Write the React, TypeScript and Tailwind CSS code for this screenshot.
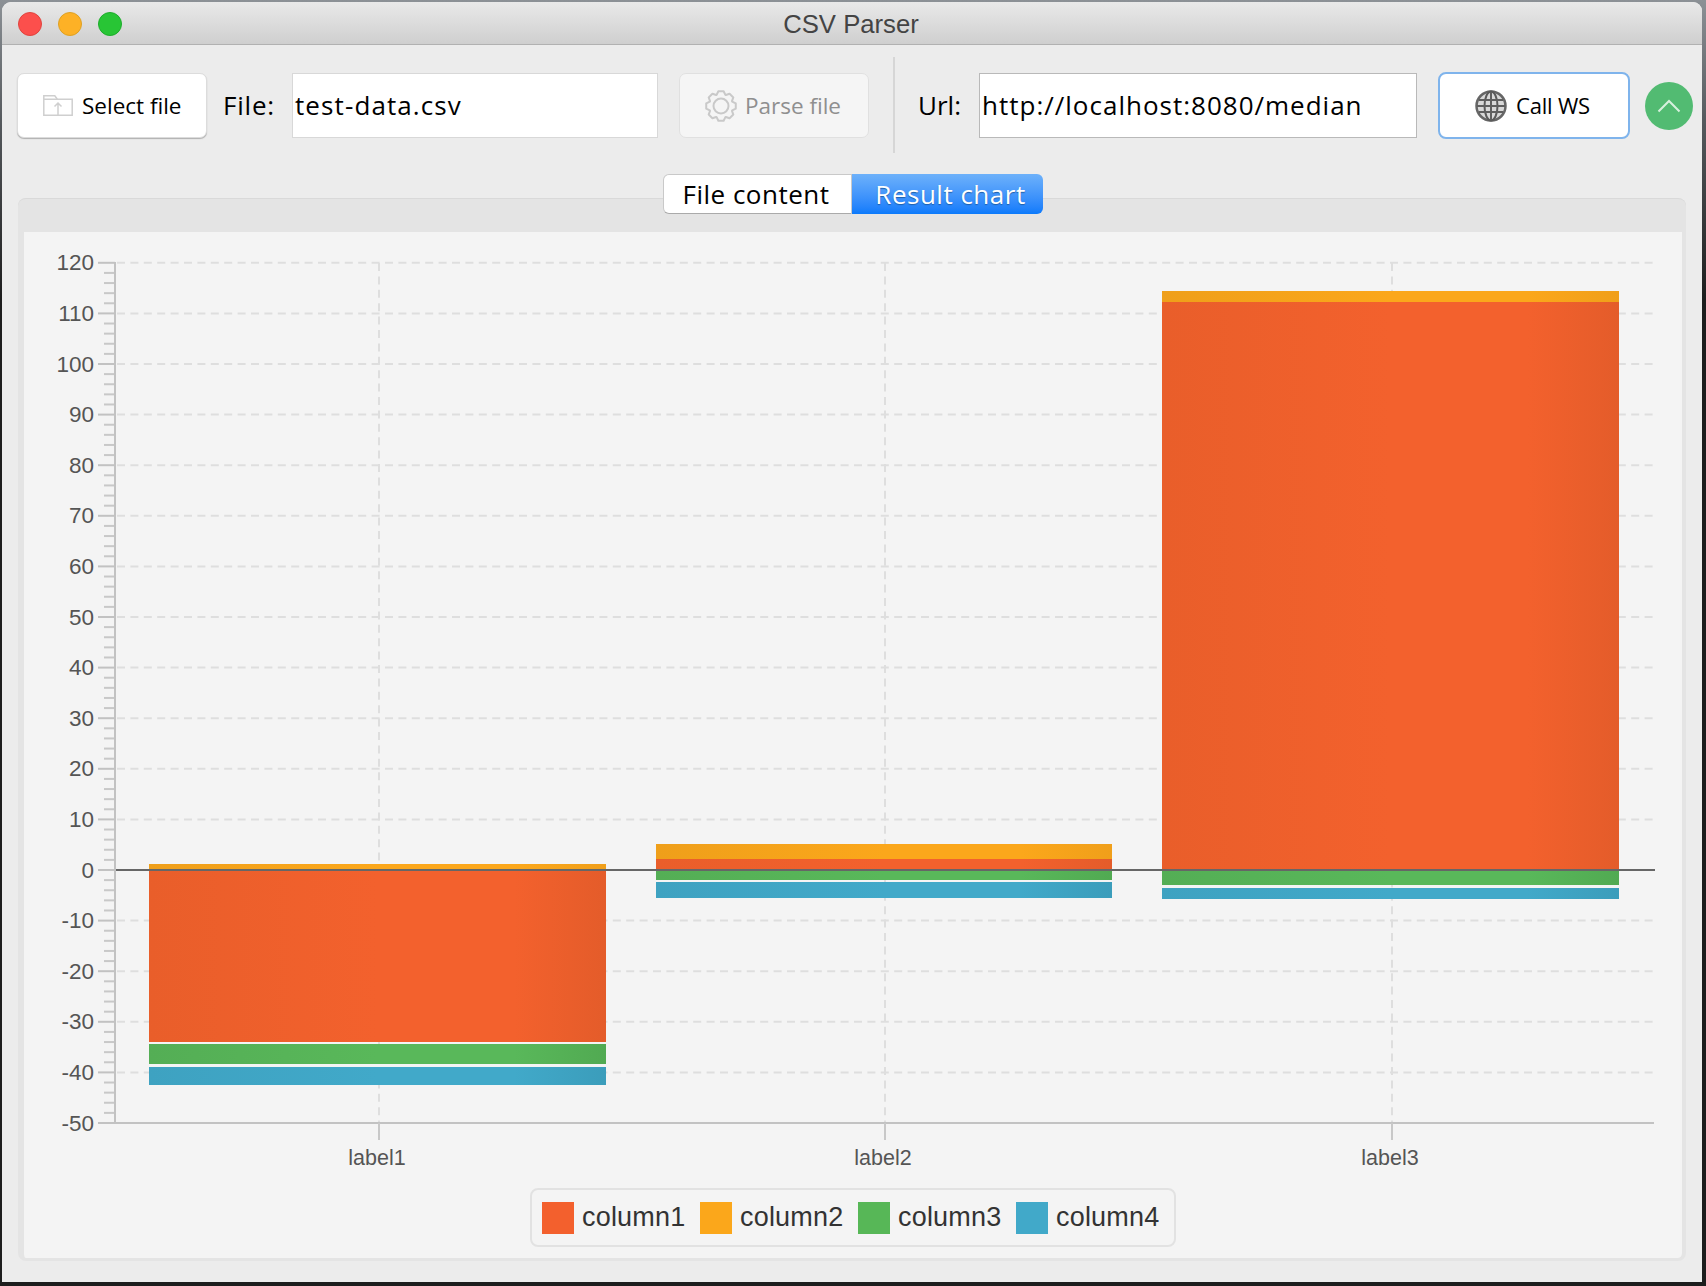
const majorValues = [120, 110, 100, 90, 80, 70, 60, 50, 40, 30, 20, 10, 0, -10, -20, -30, -40, -50];
const categories = [
  { label: 'label1', x: 379, textX: 377 },
  { label: 'label2', x: 885, textX: 883 },
  { label: 'label3', x: 1392, textX: 1390 },
];
const bars = [
  { x: 149, w: 457, y: 864, h: 6, fill: 'url(#yellow)' },
  { x: 149, w: 457, y: 870, h: 172, fill: 'url(#red)' },
  { x: 149, w: 457, y: 1044, h: 20, fill: 'url(#green)' },
  { x: 149, w: 457, y: 1067, h: 18, fill: 'url(#blue)' },
  { x: 656, w: 456, y: 844, h: 15, fill: 'url(#yellow)' },
  { x: 656, w: 456, y: 859, h: 11, fill: 'url(#red)' },
  { x: 656, w: 456, y: 870, h: 10, fill: 'url(#green)' },
  { x: 656, w: 456, y: 882, h: 16, fill: 'url(#blue)' },
  { x: 1162, w: 457, y: 291, h: 11, fill: 'url(#yellow)' },
  { x: 1162, w: 457, y: 302, h: 568, fill: 'url(#red)' },
  { x: 1162, w: 457, y: 870, h: 15, fill: 'url(#green)' },
  { x: 1162, w: 457, y: 888, h: 11, fill: 'url(#blue)' },
];
const legend = [
  { name: 'column1', swatch: 'bg-[#f3602d]' },
  { name: 'column2', swatch: 'bg-[#fba71b]' },
  { name: 'column3', swatch: 'bg-[#57b757]' },
  { name: 'column4', swatch: 'bg-[#41a9c9]' },
];

const yFor = (value: number) => 870 - value * 5.06;

function Gradient({ id, left, mid, right }: { id: string; left: string; mid: string; right: string }) {
  return (
    <linearGradient id={id} x1="0" x2="1" y1="0" y2="0">
      <stop offset="0" stopColor={left} />
      <stop offset="0.5" stopColor={mid} />
      <stop offset="0.8" stopColor={mid} />
      <stop offset="1" stopColor={right} />
    </linearGradient>
  );
}

function Chart() {
  const minors: number[] = [];
  for (let v = 118; v > -50; v -= 2) {
    if (v % 10 !== 0) minors.push(v);
  }
  return (
    <svg viewBox="24 232 1658 956" className="block h-[956px] w-[1658px]">
      <defs>
        <Gradient id="red" left="#e95e2a" mid="#f3612d" right="#e45c2a" />
        <Gradient id="yellow" left="#ef9f1a" mid="#fba71b" right="#f09f1a" />
        <Gradient id="green" left="#54ae55" mid="#59b85a" right="#51aa52" />
        <Gradient id="blue" left="#3ea2c1" mid="#41a9c9" right="#3b9dbb" />
      </defs>
      {majorValues.filter((v) => v !== 0 && v !== -50).map((v) => (
        <line key={v} x1="117" x2="1654" y1={yFor(v)} y2={yFor(v)} stroke="#dedede" strokeWidth="2" strokeDasharray="8 5.4" />
      ))}
      {categories.map((c) => (
        <line key={c.label} x1={c.x} x2={c.x} y1="263" y2="1122" stroke="#dedede" strokeWidth="2" strokeDasharray="8 5.4" />
      ))}
      {bars.map((b, i) => (
        <rect key={i} x={b.x} y={b.y} width={b.w} height={b.h} fill={b.fill} />
      ))}
      {minors.map((v) => (
        <line key={v} x1="104" x2="115" y1={yFor(v)} y2={yFor(v)} stroke="#c8c8c8" strokeWidth="2" />
      ))}
      {majorValues.map((v) => (
        <g key={v}>
          <line x1="98" x2="115" y1={yFor(v)} y2={yFor(v)} stroke="#c2c2c2" strokeWidth="2" />
          <text x="94" y={yFor(v) + 7.6} textAnchor="end" fill="#555555" fontSize="22.5" fontFamily="'Liberation Sans', sans-serif">
            {v}
          </text>
        </g>
      ))}
      <line x1="115" x2="115" y1="262" y2="1124" stroke="#c2c2c2" strokeWidth="2" />
      <line x1="115" x2="1654" y1="1123" y2="1123" stroke="#c2c2c2" strokeWidth="2" />
      <line x1="116" x2="1655" y1="870" y2="870" stroke="#666666" strokeWidth="2" />
      {categories.map((c) => (
        <g key={c.label}>
          <line x1={c.x} x2={c.x} y1="1123" y2="1140" stroke="#c8c8c8" strokeWidth="2" />
          <text x={c.textX} y="1165" textAnchor="middle" fill="#555555" fontSize="21.5" fontFamily="'Liberation Sans', sans-serif">
            {c.label}
          </text>
        </g>
      ))}
    </svg>
  );
}

function FolderIcon() {
  return (
    <svg width="30" height="21" viewBox="0 0 30 21" fill="none" stroke="#cfcfcf" strokeWidth="1.5">
      <path d="M.8 20.2V.8h11l2.5 3.4h14.9v16z" />
      <path d="M.8 4.2h13.5M15 20V9M11.5 11.5 15 8l3.5 3.5" />
    </svg>
  );
}

function GearIcon() {
  const points: string[] = [];
  const teeth = 8;
  for (let i = 0; i < teeth; i++) {
    const a = (i * Math.PI * 2) / teeth - Math.PI / 2;
    const step = Math.PI / teeth;
    const corners = [
      [12, a - step * 0.95],
      [15, a - step * 0.45],
      [15, a + step * 0.45],
      [12, a + step * 0.95],
    ];
    for (const [r, t] of corners) {
      points.push(`${(16 + r * Math.cos(t)).toFixed(2)},${(16 + r * Math.sin(t)).toFixed(2)}`);
    }
  }
  return (
    <svg width="32" height="32" viewBox="0 0 32 32" fill="none" stroke="#c9c9c9" strokeWidth="2">
      <polygon points={points.join(' ')} strokeLinejoin="round" />
      <circle cx="16" cy="16" r="7.5" />
    </svg>
  );
}

function GlobeIcon() {
  return (
    <svg width="32" height="32" viewBox="0 0 32 32" fill="none">
      <circle cx="16" cy="16" r="14.5" fill="#d8d8d8" stroke="#666666" strokeWidth="2.5" />
      <ellipse cx="16" cy="16" rx="6.5" ry="14.5" stroke="#5a5a5a" strokeWidth="2" />
      <path d="M16 2v28M2 16h28M4 10h24M4 22h24" stroke="#5f5f5f" strokeWidth="2" />
    </svg>
  );
}

export default function App() {
  return (
    <div className="h-[1286px] w-[1706px] overflow-hidden bg-[#1d1d1d] bg-[linear-gradient(180deg,#8c9196_0,#565a5e_120px,#1d1d1d_300px)] pt-[2px] pl-[2px] font-['Open_Sans',sans-serif]">
      <div className="h-[1280px] w-[1700px] overflow-hidden rounded-t-[9px] bg-[#ececec]">
        {/* Title bar */}
        <div className="relative flex h-[43px] items-center justify-center border-b border-[#b1b1b1] bg-gradient-to-b from-[#e9e9e9] to-[#cfcfcf]">
          <div className="absolute top-[10px] left-[16px] flex gap-[16px]">
            <div className="size-[24px] rounded-full border border-[#e0443e] bg-[#fc4f4c]" />
            <div className="size-[24px] rounded-full border border-[#dea123] bg-[#fdb126]" />
            <div className="size-[24px] rounded-full border border-[#1dad2b] bg-[#28c535]" />
          </div>
          <span className="mt-[4px] -ml-[2px] font-['Liberation_Sans',sans-serif] text-[25.7px] leading-none text-[#444444]">CSV Parser</span>
        </div>

        {/* Toolbar */}
        <div className="mt-[12px] flex h-[97px] items-center pl-[15px]">
          <button className="flex h-[65px] w-[190px] items-center gap-[9px] rounded-[7px] border border-[#dcdcdc] bg-white pl-[25px] text-[22.5px] text-black shadow-[0_1px_1px_#b0b0b0]">
            <FolderIcon />
            <span>Select file</span>
          </button>
          <span className="ml-[16px] w-[69px] text-[26px] tracking-[0.8px] text-black">File:</span>
          <div className="flex h-[65px] w-[366px] items-center border border-[#d8d8d8] bg-white pl-[2px] text-[26px] tracking-[1.1px] text-black">test-data.csv</div>
          <button className="ml-[21px] flex h-[65px] w-[190px] items-center gap-[8px] rounded-[7px] border border-[#e0e0e0] bg-[#f5f5f5] pl-[25px] text-[22.5px] text-[#8f8f8f]">
            <GearIcon />
            <span>Parse file</span>
          </button>
          <div className="ml-[24px] h-[96px] w-[2px] self-start bg-[#d6d6d6]" />
          <span className="ml-[23px] w-[61px] text-[26px] text-black">Url:</span>
          <div className="flex h-[65px] w-[438px] items-center border border-[#b9b9b9] bg-white pl-[2px] text-[26px] tracking-[1px] text-black">http://localhost:8080/median</div>
          <button className="ml-[21px] flex h-[67px] w-[192px] items-center gap-[9px] rounded-[8px] border-2 border-[#7fb4ec] bg-white pl-[35px] text-[22px] tracking-[-0.2px] text-black">
            <GlobeIcon />
            <span>Call WS</span>
          </button>
          <div className="ml-[15px] flex size-[48px] items-center justify-center rounded-full bg-[#52bb72]">
            <svg width="24" height="14" viewBox="0 0 24 14" fill="none" stroke="#d7f0de" strokeWidth="2">
              <path d="M1.5 12.5 12 2l10.5 10.5" />
            </svg>
          </div>
        </div>

        {/* Tabs */}
        <div className="relative z-10 mt-[20px] ml-[661px] flex h-[40px] w-[380px] text-[26px] tracking-[0.5px]">
          <div className="flex w-[189px] items-center justify-center rounded-l-[6px] border border-[#c9c9c9] border-b-[#aaaaaa] bg-white pr-[3px] text-black">File content</div>
          <div className="flex w-[191px] items-center justify-center rounded-r-[6px] bg-gradient-to-b from-[#6db1fa] to-[#0a7afb] pl-[6px] text-white [text-shadow:0_1px_1px_#1f5fa8]">Result chart</div>
        </div>

        {/* Chart panel */}
        <div className="-mt-[16px] ml-[16px] w-[1668px] rounded-[8px] border-r-[4px] border-b-[3px] border-l-[6px] border-[#e4e4e4] bg-[#f4f4f4]">
          <div className="-mr-[4px] -ml-[6px] h-[34px] rounded-t-[8px] border-t border-[#d9d9d9] bg-[#e4e4e4]" />
          <Chart />
          <div className="flex justify-center pb-[11px]">
            <div className="flex h-[59px] w-[646px] items-center gap-[9px] rounded-[8px] border-2 border-[#e2e2e2] pl-[10px] font-['Liberation_Sans',sans-serif] text-[27px] tracking-[0.2px] text-[#333333]">
              {legend.map((item) => (
                <div key={item.name} className="flex w-[149px] items-center gap-[8px]">
                  <div className={`h-[32px] w-[32px] shrink-0 ${item.swatch}`} />
                  <span>{item.name}</span>
                </div>
              ))}
            </div>
          </div>
        </div>
      </div>
    </div>
  );
}
